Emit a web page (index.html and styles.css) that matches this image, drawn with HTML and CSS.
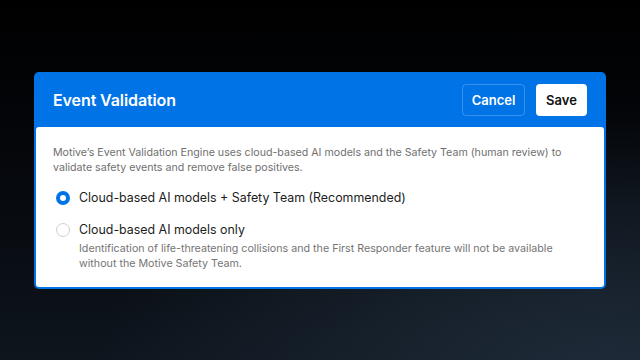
FILE: index.html
```html
<!DOCTYPE html>
<html>
<head>
    <title>Event Validation</title>
    <link rel="stylesheet" href="styles.css">
</head>
<body>
    <div class="modal">
        <div class="modal-header">
            <h1>Event Validation</h1>
            <div class="actions">
                <button class="btn cancel">Cancel</button>
                <button class="btn save">Save</button>
            </div>
        </div>

        <div class="modal-body">
            <p class="intro">Motive’s Event Validation Engine uses cloud-based AI models and the Safety Team (human review) to validate safety events and remove false positives.</p>

            <label class="option">
                <span class="radio checked"></span>
                <span class="option-text">
                    <span class="option-title">Cloud-based AI models + Safety Team (Recommended)</span>
                </span>
            </label>

            <label class="option">
                <span class="radio"></span>
                <span class="option-text">
                    <span class="option-title">Cloud-based AI models only</span>
                    <span class="option-note">Identification of life-threatening collisions and the First Responder feature will not be available without the Motive Safety Team.</span>
                </span>
            </label>
        </div>
    </div>
</body>
</html>
```

FILE: styles.css
```css
html, body {
    height: 100%;
}

body {
    margin: 0;
    font-family: Inter, "Noto Sans", sans-serif;
    background:
        radial-gradient(ellipse 80% 75% at 95% 105%, #1f2b39 0%, rgba(28, 40, 53, 0.7) 40%, rgba(0, 0, 0, 0) 100%),
        linear-gradient(180deg, #000 0%, #04060a 40%, #0e151d 100%);
    display: flex;
    justify-content: center;
    padding-top: 72px;
    box-sizing: border-box;
}

.modal {
    width: 572px;
    height: 217px;
    background-color: #0073e6;
    border-radius: 5px;
    padding: 0 2px 2px 2px;
    box-sizing: border-box;
    display: flex;
    flex-direction: column;
}

.modal-header {
    height: 55px;
    display: flex;
    align-items: center;
    justify-content: space-between;
    padding: 0 17px 0 17px;
}

.modal-header h1 {
    margin: 0;
    color: #FFF;
    font-size: 16px;
    font-weight: 600;
    letter-spacing: -0.1px;
}

.actions {
    display: flex;
    gap: 11px;
    margin-top: 1px;
}

.btn {
    height: 32px;
    border-radius: 4px;
    font-family: Inter, "Noto Sans", sans-serif;
    font-size: 13px;
    font-weight: 600;
    cursor: pointer;
}

.btn.cancel {
    width: 63px;
    background-color: transparent;
    border: 1px solid rgba(255, 255, 255, 0.22);
    color: #FFF;
}

.btn.save {
    width: 51px;
    background-color: #FFF;
    border: none;
    color: #111;
}

.modal-body {
    flex: 1;
    background-color: #FFF;
    border-radius: 3px;
    padding: 18px 17px 0 17px;
}

.intro {
    margin: 0 0 14px 0;
    font-size: 10.65px;
    line-height: 15px;
    color: #6f6f6f;
}

.option {
    display: flex;
    align-items: flex-start;
    gap: 9px;
    margin-bottom: 14px;
}

.radio {
    width: 14px;
    height: 14px;
    box-sizing: border-box;
    border-radius: 50%;
    border: 1px solid #cfcfcf;
    margin: 2px 0 0 3px;
    flex-shrink: 0;
}

.radio.checked {
    border: 4px solid #0073e6;
}

.option-text {
    display: flex;
    flex-direction: column;
}

.option-title {
    font-size: 12.4px;
    line-height: 18px;
    color: #1c1c1c;
}

.option-note {
    margin-top: 2px;
    font-size: 10.7px;
    line-height: 15px;
    color: #747474;
}
```
